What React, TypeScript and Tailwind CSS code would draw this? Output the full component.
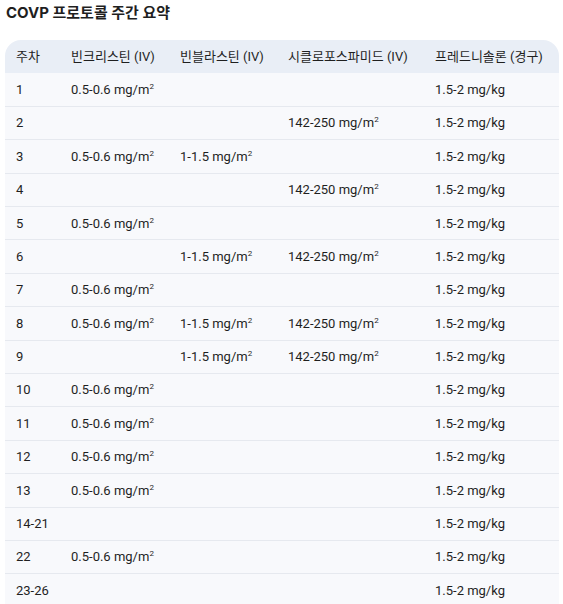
import React from 'react';

const m2 = (v: string) => (
  <>
    {v} mg/m<sup className="text-[8px] -top-[5px]">2</sup>
  </>
);

type Row = { week: string; vcr?: boolean; vbl?: boolean; cyc?: boolean };

const rows: Row[] = [
  { week: '1', vcr: true },
  { week: '2', cyc: true },
  { week: '3', vcr: true, vbl: true },
  { week: '4', cyc: true },
  { week: '5', vcr: true },
  { week: '6', vbl: true, cyc: true },
  { week: '7', vcr: true },
  { week: '8', vcr: true, vbl: true, cyc: true },
  { week: '9', vbl: true, cyc: true },
  { week: '10', vcr: true },
  { week: '11', vcr: true },
  { week: '12', vcr: true },
  { week: '13', vcr: true },
  { week: '14-21' },
  { week: '22', vcr: true },
  { week: '23-26' },
];

export default function App() {
  return (
    <div className="bg-white h-[604px] overflow-hidden text-[#1f1f1f] font-['Inter','Noto_Sans_CJK_KR',sans-serif]">
      <h2 className="pl-[6px] pt-[4px] h-[40px] text-[15px] font-bold leading-[18px]">
        COVP 프로토콜 주간 요약
      </h2>
      <div className="ml-[5px] w-[554px] rounded-t-[16px] overflow-hidden">
        <table className="w-full border-collapse text-[13px] text-left font-['Roboto','Noto_Sans_CJK_KR',sans-serif]">
          <colgroup>
            <col className="w-[55px]" />
            <col className="w-[109px]" />
            <col className="w-[108px]" />
            <col className="w-[147px]" />
            <col className="w-[135px]" />
          </colgroup>
          <thead>
            <tr className="bg-[#e9eef6] h-[33px]">
              <th className="pl-[11px] font-normal">주차</th>
              <th className="pl-[11px] font-normal">빈크리스틴 (IV)</th>
              <th className="pl-[11px] font-normal">빈블라스틴 (IV)</th>
              <th className="pl-[11px] font-normal">시클로포스파미드 (IV)</th>
              <th className="pl-[11px] font-normal">프레드니솔론 (경구)</th>
            </tr>
          </thead>
          <tbody>
            {rows.map((r) => (
              <tr key={r.week} className="bg-[#f8f9fc] h-[33.4px] border-b border-[#e6e9ef]">
                <td className="pl-[11px]">{r.week}</td>
                <td className="pl-[11px]">{r.vcr && m2('0.5-0.6')}</td>
                <td className="pl-[11px]">{r.vbl && m2('1-1.5')}</td>
                <td className="pl-[11px]">{r.cyc && m2('142-250')}</td>
                <td className="pl-[11px]">1.5-2 mg/kg</td>
              </tr>
            ))}
          </tbody>
        </table>
      </div>
    </div>
  );
}
